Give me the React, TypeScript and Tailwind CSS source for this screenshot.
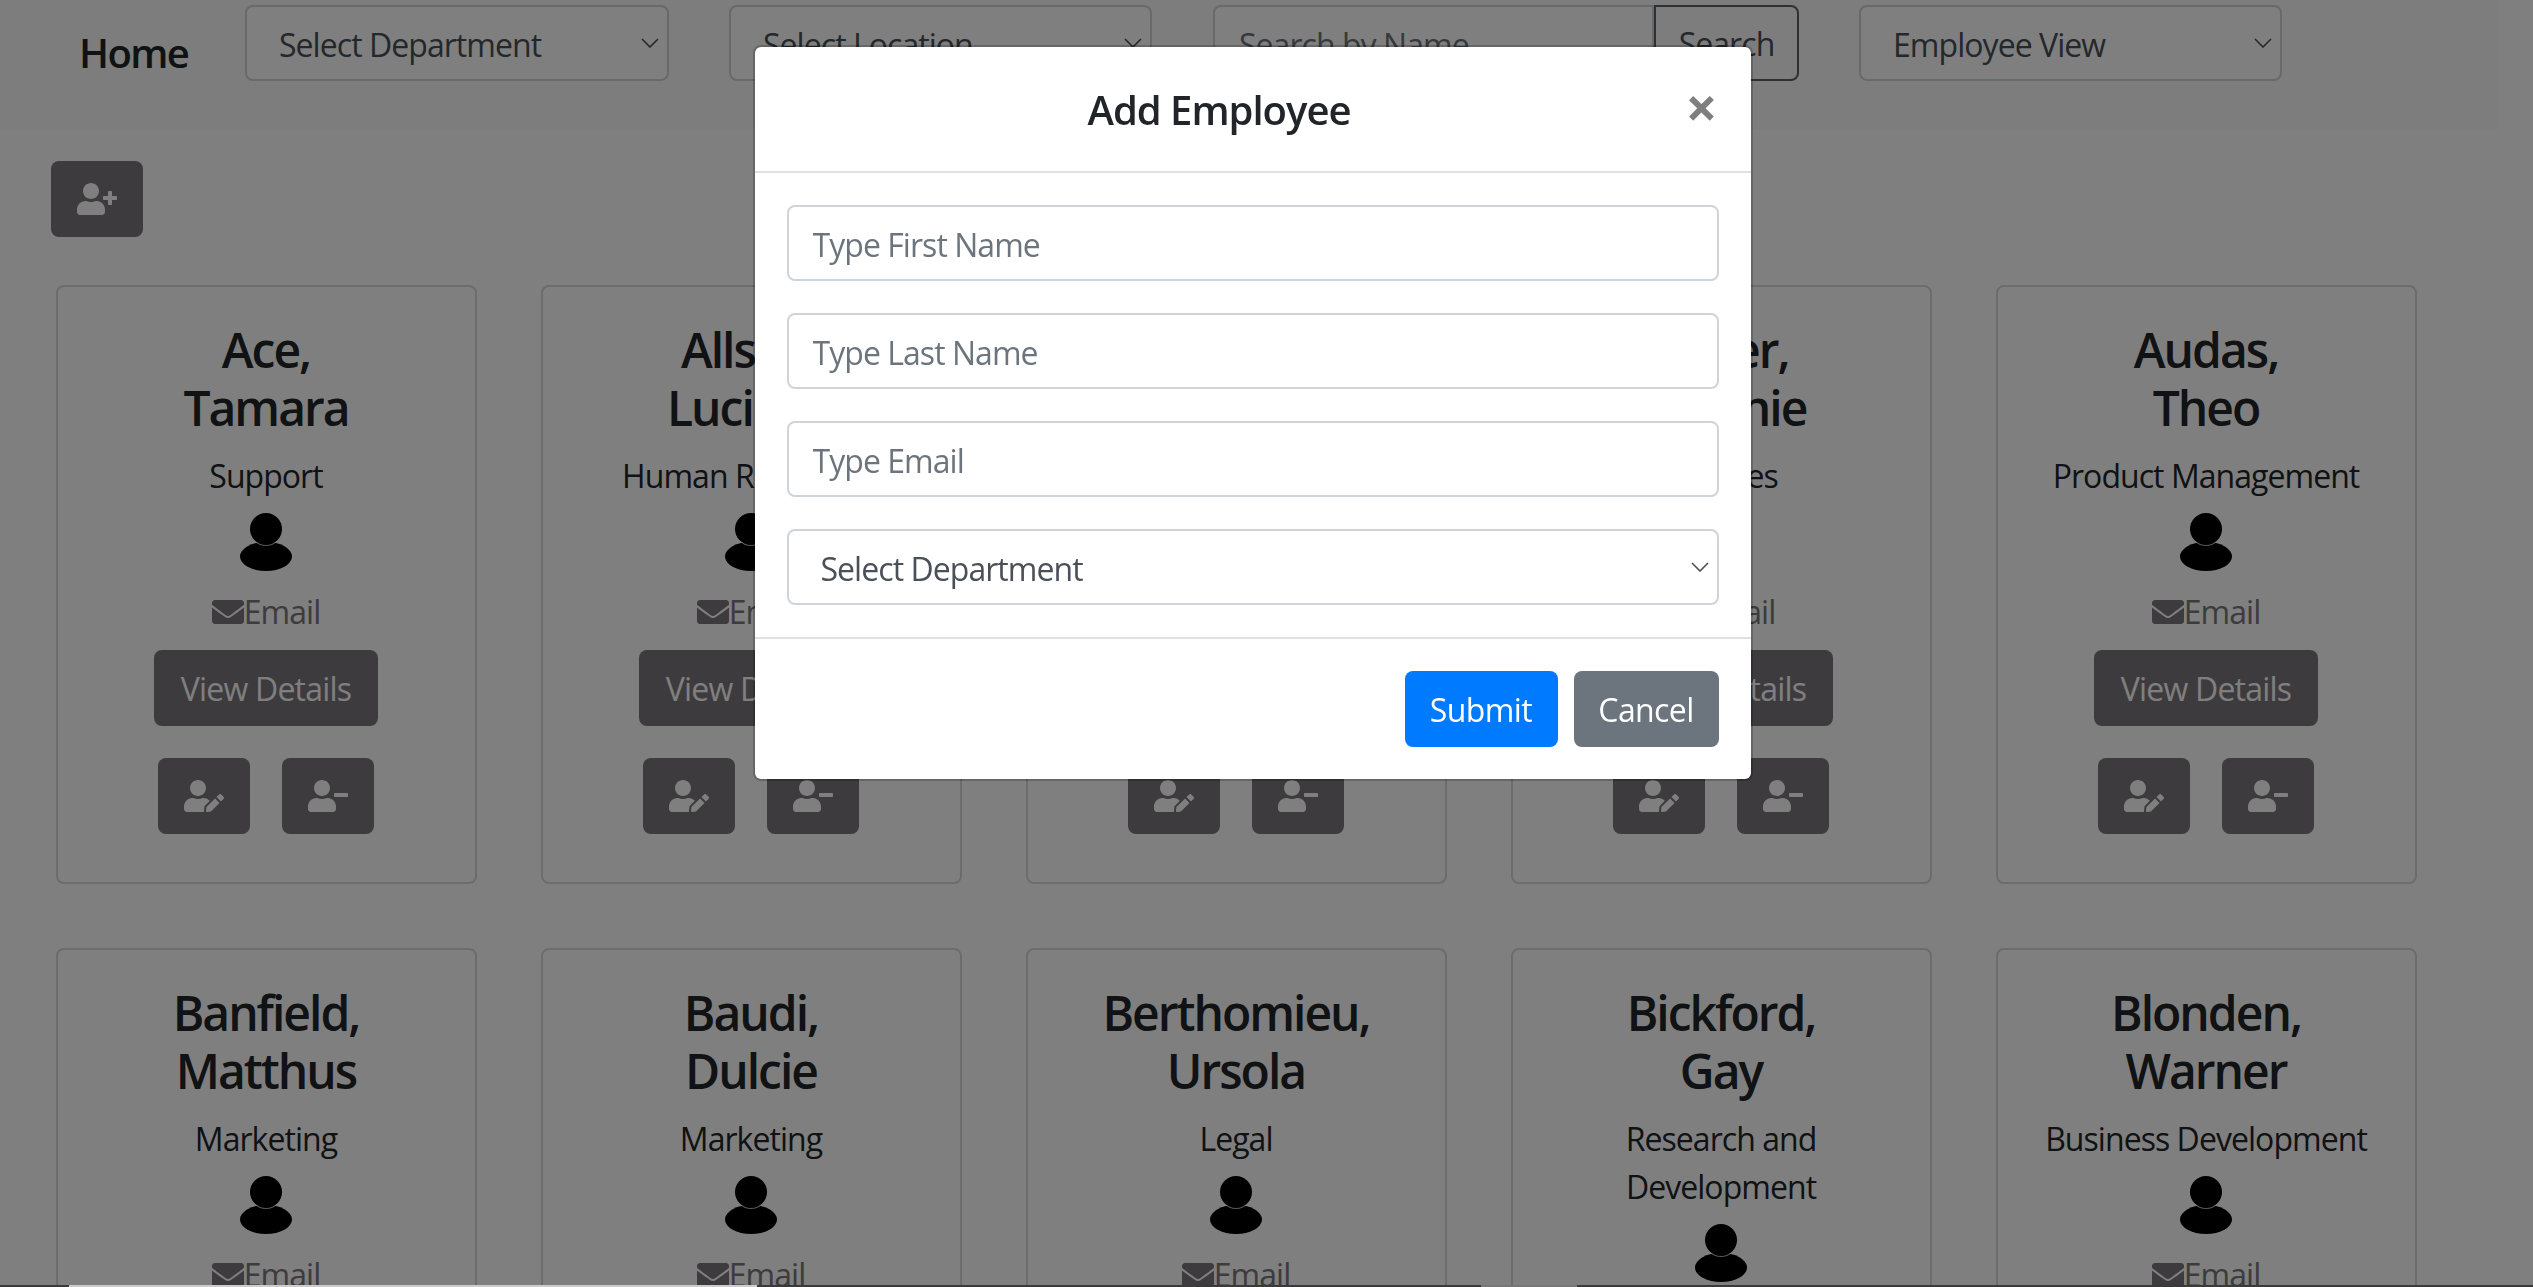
import { FaEnvelope, FaUserEdit, FaUserMinus, FaUserPlus } from 'react-icons/fa';

interface Employee {
  last: string;
  first: string;
  department: string;
}

const EMPLOYEES: Employee[] = [
  { last: 'Ace', first: 'Tamara', department: 'Support' },
  { last: 'Allsop', first: 'Lucinda', department: 'Human Resources' },
  { last: 'Arnold', first: 'Kim', department: 'Training' },
  { last: 'Asher', first: 'Melanie', department: 'Services' },
  { last: 'Audas', first: 'Theo', department: 'Product Management' },
  { last: 'Banfield', first: 'Matthus', department: 'Marketing' },
  { last: 'Baudi', first: 'Dulcie', department: 'Marketing' },
  { last: 'Berthomieu', first: 'Ursola', department: 'Legal' },
  { last: 'Bickford', first: 'Gay', department: 'Research and Development' },
  { last: 'Blonden', first: 'Warner', department: 'Business Development' },
];

function Chevron() {
  return (
    <svg viewBox="0 0 18 10" className="absolute right-[10px] top-1/2 -mt-[5px] h-[10px] w-[18px] pointer-events-none">
      <polyline points="1,1 9,9 17,1" fill="none" stroke="currentColor" strokeWidth="1.6" />
    </svg>
  );
}

function SelectBox({ label, className }: { label: string; className: string }) {
  return (
    <div className={`relative text-[#495057] ${className}`}>
      <select className="h-full w-full appearance-none rounded-lg border-2 border-[#ced4da] bg-white pl-[32px] pr-[40px] pt-[4px] text-[32px] leading-[48px] text-[#495057]">
        <option>{label}</option>
      </select>
      <Chevron />
    </div>
  );
}

function PersonIcon() {
  return (
    <svg viewBox="0 0 52 58" className="h-[58px] w-[52px]">
      <ellipse cx="26" cy="43.5" rx="26" ry="14.5" fill="#000" />
      <circle cx="26" cy="16" r="17" fill="#fff" fillOpacity="0.7" />
      <circle cx="26" cy="16" r="16" fill="#000" />
    </svg>
  );
}

function IconButton({ children }: { children: React.ReactNode }) {
  return (
    <button className="flex h-[76px] w-[92px] items-center justify-center rounded-lg bg-[#7a777a] text-white">
      {children}
    </button>
  );
}

function EmployeeCard({ employee }: { employee: Employee }) {
  return (
    <div className="flex h-[599px] flex-col items-center rounded-lg border-2 border-[#d8d8d8] pl-[31px] pr-[32px] pt-[34px] text-center">
      <h4 className="text-[48px] font-semibold leading-[58px] tracking-[-2px] text-[#212529]">
        {employee.last},<br />
        {employee.first}
      </h4>
      <p className="mt-[15px] text-[32px] leading-[48px] text-[#212529]">{employee.department}</p>
      <div className="mt-[13px] flex h-[58px] shrink-0 items-center">
        <PersonIcon />
      </div>
      <a className="mt-[17px] flex items-center text-[32px] leading-[48px] text-[#7a777a]">
        <FaEnvelope className="h-[32px] w-[32px]" />
        Email
      </a>
      <button className="mt-[14px] h-[76px] w-[224px] rounded-lg bg-[#7a777a] pt-[2px] text-[32px] tracking-[-0.8px] text-white">
        View Details
      </button>
      <div className="mt-[32px] flex gap-[32px]">
        <IconButton>
          <FaUserEdit className="h-[32px] w-[40px]" />
        </IconButton>
        <IconButton>
          <FaUserMinus className="h-[32px] w-[40px]" />
        </IconButton>
      </div>
    </div>
  );
}

function AddEmployeeModal() {
  const fieldClass =
    'h-[76px] w-full rounded-lg border-2 border-[#ced4da] bg-white px-[24px] pt-[2px] text-[32px] text-[#495057] placeholder:text-[#6c757d]';

  return (
    <div className="fixed inset-0 z-50 flex justify-center bg-black/50 pr-[28px] pt-[45px]">
      <div className="h-[736px] w-[1000px] rounded-lg border-2 border-black/20 bg-white bg-clip-padding">
        {/* Header */}
        <div className="flex h-[126px] items-start border-b-2 border-[#dee2e6] px-[32px]">
          <h5 className="mx-auto pt-[33px] text-[40px] font-semibold leading-[60px] tracking-[-1px] text-[#212529]">Add Employee</h5>
          <button className="w-[67px] pr-[2px] pt-[35px] text-right text-[56px] font-bold leading-[48px] text-black/50">×</button>
        </div>

        {/* Content */}
        <div className="flex flex-col gap-[32px] border-b-2 border-[#dee2e6] px-[32px] py-[32px]">
          <input className={fieldClass} placeholder="Type First Name" />
          <input className={fieldClass} placeholder="Type Last Name" />
          <input className={fieldClass} placeholder="Type Email" />
          <SelectBox label="Select Department" className="h-[76px]" />
        </div>

        {/* Footer */}
        <div className="flex justify-end gap-[16px] p-[32px]">
          <button className="h-[76px] w-[153px] rounded-lg bg-[#007bff] pt-[2px] text-[32px] tracking-[-0.6px] text-white">Submit</button>
          <button className="h-[76px] w-[145px] rounded-lg bg-[#6c757d] pt-[2px] text-[32px] tracking-[-0.6px] text-white">Cancel</button>
        </div>
      </div>
    </div>
  );
}

export default function App() {
  return (
    <div className="relative h-screen overflow-hidden bg-white font-['Open_Sans',sans-serif] tracking-[-0.95px]">
      {/* Navbar */}
      <nav className="flex h-[129px] w-[2498px] items-start bg-[#f8faf8] pl-[79px] pt-[5px]">
        <a className="mt-[18px] w-[166px] text-[40px] font-semibold leading-[60px] tracking-[-1.6px] text-[#212529]">Home</a>
        <SelectBox label="Select Department" className="h-[76px] w-[424px]" />
        <SelectBox label="Select Location" className="ml-[60px] h-[76px] w-[423px]" />
        <div className="ml-[61px] flex h-[76px]">
          <input
            className="h-full w-[441px] rounded-l-lg border-2 border-[#ced4da] bg-white px-[24px] pt-[2px] text-[32px] placeholder:text-[#6c757d]"
            placeholder="Search by Name"
          />
          <button className="h-full w-[145px] rounded-r-lg border-2 border-[#5c6268] pt-[2px] text-[32px] text-[#4a5056]">Search</button>
        </div>
        <SelectBox label="Employee View" className="ml-[60px] h-[76px] w-[423px]" />
      </nav>

      <button className="ml-[51px] mt-[32px] flex h-[76px] w-[92px] items-center justify-center rounded-lg bg-[#7a777a] text-white">
        <FaUserPlus className="h-[32px] w-[40px]" />
      </button>

      {/* Employees */}
      <div className="ml-[56px] mt-[48px] grid grid-cols-[repeat(5,421px)] gap-x-[64px] gap-y-[64px]">
        {EMPLOYEES.map((employee) => (
          <EmployeeCard key={employee.last} employee={employee} />
        ))}
      </div>

      <AddEmployeeModal />

      {/* Strip along the bottom edge */}
      <div className="absolute inset-x-0 bottom-0 z-50 flex h-[2px] bg-[#3a3a3a]">
        <div className="ml-[69px] w-[688px] bg-[#cccccc]" />
        <div className="ml-[724px] w-[96px] bg-[#777777]" />
      </div>
    </div>
  );
}
